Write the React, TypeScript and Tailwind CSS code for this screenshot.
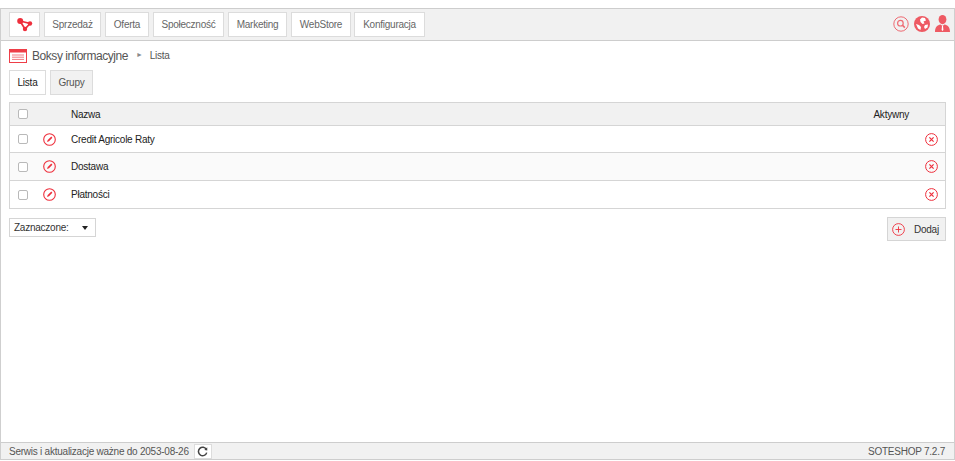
const navItems: [string, string, string][] = [
  ["Sprzedaż", "w-[57px]", "ml-[4px]"],
  ["Oferta", "w-[44px]", "ml-[4px]"],
  ["Społeczność", "w-[71px]", "ml-[4px]"],
  ["Marketing", "w-[59px]", "ml-[4px]"],
  ["WebStore", "w-[60px]", "ml-[4px]"],
  ["Konfiguracja", "w-[71px]", "ml-[3px]"],
];

function Logo() {
  return (
    <svg width="16" height="14" viewBox="0 0 16 14">
      <path d="M3 3 L13 5.5 L8 11 Z" fill="none" stroke="#ee2f3c" strokeWidth="1.7" />
      <circle cx="3.2" cy="3" r="3" fill="#ee2f3c" />
      <circle cx="13" cy="5.5" r="2.2" fill="#ee2f3c" />
      <circle cx="8" cy="11" r="2.2" fill="#ee2f3c" />
    </svg>
  );
}

function SearchIcon() {
  return (
    <svg width="16" height="16" viewBox="0 0 16 16" fill="none" stroke="#ee6a72">
      <circle cx="8" cy="8" r="7.2" strokeWidth="1" />
      <circle cx="7.4" cy="7.2" r="2.8" strokeWidth="1.2" />
      <path d="M9.6 9.4 L11.8 11.6" strokeWidth="1.5" />
    </svg>
  );
}

function GlobeIcon() {
  return (
    <svg width="16" height="16" viewBox="0 0 16 16">
      <circle cx="8" cy="8" r="8" fill="#ee5a63" />
      <path d="M8 1.5 L11 2 L12 4.5 L9.5 5.5 L10.5 7.5 L8.5 8 L6.5 6 L6 3.5 Z M11 9 L14 8.5 L13.5 11.5 L11 13 L10 11 Z M2 8 L5 9 L7 11 L6.5 14 L4 12.5 Z" fill="#fff" />
    </svg>
  );
}

function UserIcon() {
  return (
    <svg width="15" height="17" viewBox="0 0 15 17" fill="#ee5a63">
      <ellipse cx="7.5" cy="4.6" rx="3.9" ry="4.6" />
      <path d="M0 17 C0 12 2.5 10.2 5.5 9.6 L7.5 11 L9.5 9.6 C12.5 10.2 15 12 15 17 Z" />
      <path d="M7 11 H8 L8.4 15 L7.5 16 L6.6 15 Z" fill="#fff" />
    </svg>
  );
}

function BoxIcon() {
  return (
    <svg width="18" height="14" viewBox="0 0 18 14" fill="none">
      <rect x="0.5" y="0.5" width="17" height="13" fill="#fff" stroke="#ee3e48" />
      <rect x="0.5" y="0.5" width="17" height="2.5" fill="#ee3e48" stroke="#ee3e48" />
      <path d="M3 6 H15 M3 8.2 H15 M3 10.4 H15" stroke="#f27a82" strokeWidth="1" />
    </svg>
  );
}

function EditIcon() {
  return (
    <svg width="13" height="13" viewBox="0 0 13 13" fill="none">
      <circle cx="6.5" cy="6.5" r="5.8" stroke="#ee2f3c" strokeWidth="1.1" />
      <path d="M4 9 L4.7 7 L8.3 3.6 L9.4 4.7 L6 8.3 Z" fill="#ee2f3c" />
    </svg>
  );
}

function CrossIcon() {
  return (
    <svg width="13" height="13" viewBox="0 0 13 13" fill="none" stroke="#ee2f3c">
      <circle cx="6.5" cy="6.5" r="5.9" strokeWidth="1" />
      <path d="M4.4 4.4 L8.6 8.6 M8.6 4.4 L4.4 8.6" strokeWidth="1.2" />
    </svg>
  );
}

function PlusIcon() {
  return (
    <svg width="13" height="13" viewBox="0 0 13 13" fill="none" stroke="#ee2f3c">
      <circle cx="6.5" cy="6.5" r="5.9" strokeWidth="0.9" />
      <path d="M6.5 3.5 V9.5 M3.5 6.5 H9.5" strokeWidth="0.9" />
    </svg>
  );
}

function RefreshIcon() {
  return (
    <svg width="11" height="11" viewBox="0 0 11 11" fill="none">
      <path d="M9.4 3.6 A4.2 4.2 0 1 0 9.7 6.6" stroke="#444" strokeWidth="1.5" />
      <path d="M7.3 3.9 L10.3 4.4 L10.2 1.2 Z" fill="#444" />
    </svg>
  );
}

function Box() {
  return <span className="block w-[10px] h-[10px] rounded-[2px] border border-[#b9b9b9] bg-white" />;
}

const rows: [string, string][] = [
  ["Credit Agricole Raty", "bg-white h-[27px]"],
  ["Dostawa", "bg-[#fafafa] h-[28px]"],
  ["Płatności", "bg-white h-[27px]"],
];

export default function App() {
  return (
    <div className="bg-white w-[955px] h-[461px] pt-[8px] pb-[1px] font-['Liberation_Sans',Arial,sans-serif] text-[10px] tracking-[-0.24px] overflow-hidden">
      <div className="h-[452px] flex flex-col border-x border-[#cfcfcf]">
        <header className="h-[33px] shrink-0 bg-[#f1f1f1] border-y border-[#cdcdcd] flex items-start pl-[8px] pr-[4px] pt-[3px]">
          <div className="flex">
            <div className="w-[31px] h-[25px] bg-white border border-[#dcdcdc] flex items-center justify-center">
              <Logo />
            </div>
            {navItems.map(([label, w, ml]) => (
              <div
                key={label}
                className={`${w} ${ml} h-[25px] bg-white border border-[#dcdcdc] flex items-center justify-center text-[#666666]`}
              >
                {label}
              </div>
            ))}
          </div>
          <div className="ml-auto flex items-center gap-[5px] h-[25px] mt-[-1px]">
            <SearchIcon />
            <GlobeIcon />
            <UserIcon />
          </div>
        </header>

        <main className="flex-1 px-[8px] flex flex-col">
          <div className="flex items-center h-[29px]">
            <BoxIcon />
            <span className="ml-[5px] text-[12px] tracking-[-0.45px] text-[#555555]">Boksy informacyjne</span>
            <span className="ml-[8px] mr-[7px] text-[7px] text-[#8a8a8a]">►</span>
            <span className="text-[#555555]">Lista</span>
          </div>

          <div className="flex gap-[4px]">
            <div className="w-[37px] h-[25px] bg-white border border-[#dcdcdc] flex items-center justify-center text-[#222222]">
              Lista
            </div>
            <div className="w-[43px] h-[25px] bg-[#f1f1f1] border border-[#dcdcdc] flex items-center justify-center text-[#555555]">
              Grupy
            </div>
          </div>

          <div className="mt-[7px] border border-[#d5d5d5]">
            <div className="h-[23px] bg-[#f1f1f1] flex items-center border-b border-[#d5d5d5] text-[#222222]">
              <span className="ml-[8px]"><Box /></span>
              <span className="ml-[43px]">Nazwa</span>
              <span className="ml-auto mr-[36px]">Aktywny</span>
            </div>
            {rows.map(([name, cls], i) => (
              <div
                key={name}
                className={`${cls} flex items-center text-[#222222] ${i < 2 ? "border-b border-[#d5d5d5]" : ""}`}
              >
                <span className="ml-[8px]"><Box /></span>
                <span className="ml-[15px]"><EditIcon /></span>
                <span className="ml-[15px]">{name}</span>
                <span className="ml-auto mr-[7px]"><CrossIcon /></span>
              </div>
            ))}
          </div>

          <div className="mt-[8px] flex items-start justify-between">
            <div className="mt-[1px] w-[87px] h-[19px] bg-white border border-[#d5d5d5] flex items-center pl-[4px] text-[#333333]">
              Zaznaczone:
              <span className="ml-[13px] w-0 h-0 border-x-[3.5px] border-x-transparent border-t-[4px] border-t-[#222222]" />
            </div>
            <div className="w-[59px] h-[24px] bg-[#f1f1f1] border border-[#d5d5d5] flex items-center pl-[4px] text-[#333333]">
              <PlusIcon />
              <span className="ml-[9px]">Dodaj</span>
            </div>
          </div>
        </main>

        <footer className="h-[18px] shrink-0 bg-[#f1f1f1] border-y border-[#cdcdcd] flex items-center pl-[8px] pr-[9px] text-[#555555]">
          <span>Serwis i aktualizacje ważne do 2053-08-26</span>
          <span className="ml-[5px] w-[18px] h-[15px] bg-white border border-[#dcdcdc] flex items-center justify-center">
            <RefreshIcon />
          </span>
          <span className="ml-auto">SOTESHOP 7.2.7</span>
        </footer>
      </div>
    </div>
  );
}
